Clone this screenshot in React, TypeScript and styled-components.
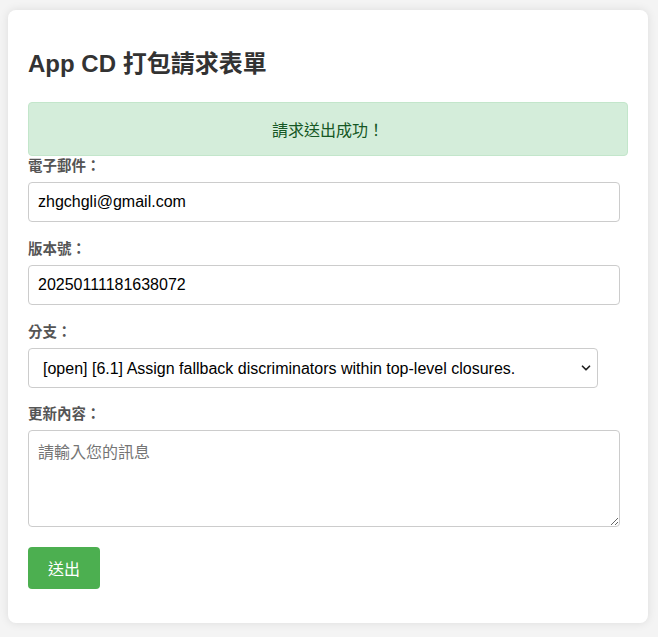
import React from "react";
import styled, { createGlobalStyle } from "styled-components";
import { ChevronDown } from "lucide-react";

const Global = createGlobalStyle`
  html, body { margin: 0; padding: 0; background: #f4f4f4; }
  body {
    font-family: "Liberation Sans", Arial, "Noto Sans CJK TC", sans-serif;
    padding: 10px 10px 14px 8px;
  }
  * { box-sizing: border-box; }
`;

const Card = styled.div`
  width: 640px;
  background: #fff;
  border-radius: 8px;
  box-shadow: 0 0 10px rgba(0, 0, 0, 0.1);
  padding: 20px 20px 34px;
`;

const Title = styled.h2`
  margin: 20px 0 24px;
  font-size: 24px;
  line-height: 28px;
  font-weight: bold;
  color: #333;
`;

const Message = styled.div`
  background: #d4edda;
  color: #155724;
  border: 1px solid #c3e6cb;
  border-radius: 4px;
  height: 54px;
  display: flex;
  align-items: center;
  justify-content: center;
  font-size: 16px;
`;

const Form = styled.form`
  display: flex;
  flex-direction: column;
  align-items: flex-start;
`;

const Label = styled.label`
  display: block;
  font-size: 14.5px;
  line-height: 20px;
  font-weight: bold;
  color: #555;
  margin-bottom: 6px;
`;

const fieldBase = `
  font-family: "Liberation Sans", Arial, "Noto Sans CJK TC", sans-serif;
  font-size: 16px;
  color: #000;
  border: 1px solid #ccc;
  border-radius: 4px;
  background: #fff;
  outline: none;
`;

const Input = styled.input`
  ${fieldBase}
  display: block;
  width: 592px;
  height: 40px;
  padding: 0 9px;
  margin-bottom: 17px;
`;

const SelectWrap = styled.div`
  position: relative;
  width: 570px;
  margin-bottom: 16px;
`;

const Select = styled.select`
  ${fieldBase}
  appearance: none;
  -webkit-appearance: none;
  display: block;
  width: 100%;
  height: 40px;
  padding: 0 30px 0 14px;
`;

const Chevron = styled.span`
  position: absolute;
  right: 5px;
  top: 13px;
  display: flex;
  pointer-events: none;
  color: #222;
`;

const TextArea = styled.textarea`
  ${fieldBase}
  display: block;
  width: 592px;
  height: 97px;
  padding: 12px 9px;
  line-height: 20px;
  margin-bottom: 20px;
  resize: both;
  &::placeholder { color: #757575; }
`;

const Button = styled.button`
  font-family: "Liberation Sans", Arial, "Noto Sans CJK TC", sans-serif;
  background: #4caf50;
  color: #fff;
  border: none;
  border-radius: 4px;
  width: 72px;
  height: 42px;
  font-size: 16px;
  cursor: pointer;
`;

export default function App() {
  return (
    <>
      <Global />
      <Card>
        <Title>App CD 打包請求表單</Title>
        <Message>請求送出成功！</Message>
        <Form onSubmit={(e) => e.preventDefault()}>
          <Label>電子郵件：</Label>
          <Input type="email" defaultValue="zhgchgli@gmail.com" />
          <Label>版本號：</Label>
          <Input type="text" defaultValue="20250111181638072" />
          <Label>分支：</Label>
          <SelectWrap>
            <Select defaultValue="a">
              <option value="a">[open] [6.1] Assign fallback discriminators within top-level closures.</option>
            </Select>
            <Chevron>
              <ChevronDown size={14} strokeWidth={3} />
            </Chevron>
          </SelectWrap>
          <Label>更新內容：</Label>
          <TextArea placeholder="請輸入您的訊息" />
          <Button type="submit">送出</Button>
        </Form>
      </Card>
    </>
  );
}
